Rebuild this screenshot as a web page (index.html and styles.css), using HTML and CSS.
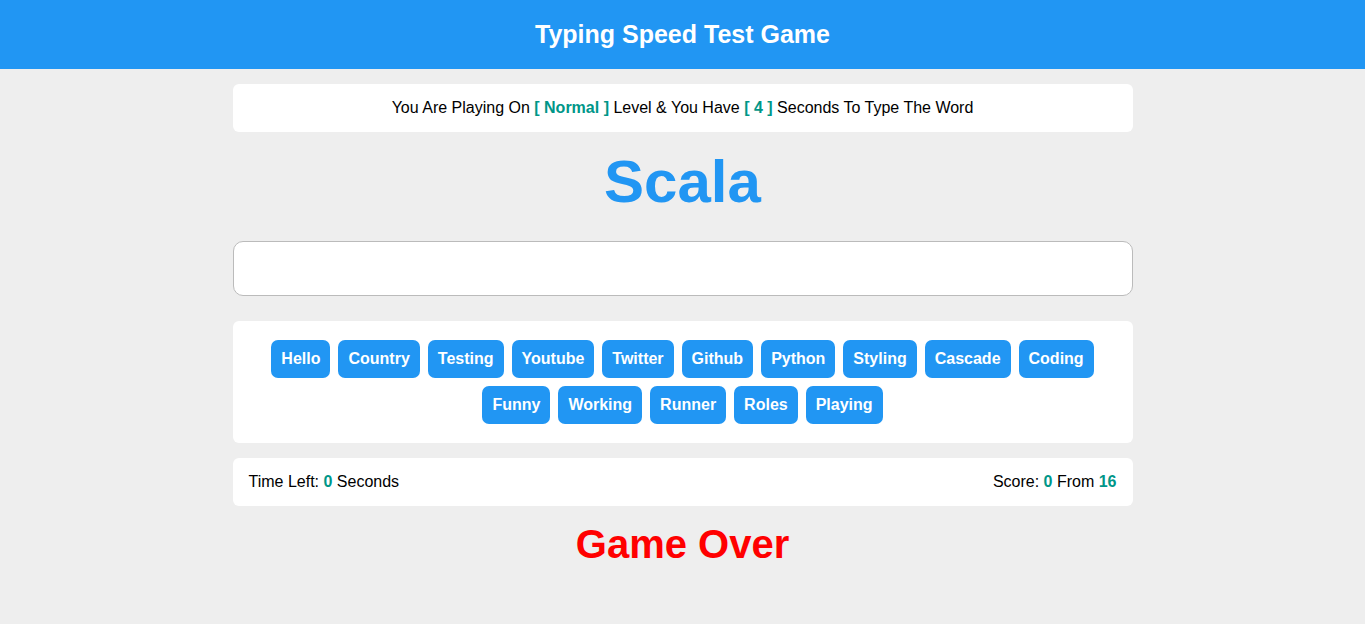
FILE: index.html
```html
<!DOCTYPE html>
<html lang="en">
<head>
<meta charset="utf-8">
<title>Typing Speed Test Game</title>
<link rel="stylesheet" href="styles.css">
</head>
<body>
<header class="site-header">Typing Speed Test Game</header>
<main class="game">
  <div class="message">You Are Playing On <span class="hl">[ Normal ]</span> Level &amp; You Have <span class="hl">[ 4 ]</span> Seconds To Type The Word</div>
  <div class="the-word">Scala</div>
  <input class="input" type="text" aria-label="Type the word">
  <div class="upcoming">
    <span class="word">Hello</span>
    <span class="word">Country</span>
    <span class="word">Testing</span>
    <span class="word">Youtube</span>
    <span class="word">Twitter</span>
    <span class="word">Github</span>
    <span class="word">Python</span>
    <span class="word">Styling</span>
    <span class="word">Cascade</span>
    <span class="word">Coding</span>
    <span class="word">Funny</span>
    <span class="word">Working</span>
    <span class="word">Runner</span>
    <span class="word">Roles</span>
    <span class="word">Playing</span>
  </div>
  <div class="control">
    <div class="time">Time Left: <span class="hl">0</span> Seconds</div>
    <div class="score">Score: <span class="hl">0</span> From <span class="hl">16</span></div>
  </div>
  <div class="finish">Game Over</div>
</main>
</body>
</html>
```

FILE: styles.css
```css
* { box-sizing: border-box; }
body {
  margin: 0;
  background: #eeeeee;
  font-family: "Liberation Sans", Arial, sans-serif;
  color: #000;
}
.site-header {
  background: #2196f3;
  color: #fff;
  font-weight: bold;
  font-size: 25px;
  line-height: 29px;
  padding: 20px;
  text-align: center;
}
.game {
  width: 900px;
  margin: 0 auto;
}
.hl {
  color: #009688;
  font-weight: bold;
}
.message {
  margin-top: 15px;
  background: #fff;
  border-radius: 6px;
  padding: 15px;
  font-size: 16px;
  line-height: 18px;
  text-align: center;
}
.the-word {
  margin: 15px 0 24px;
  font-size: 60px;
  line-height: 70px;
  font-weight: bold;
  color: #2196f3;
  text-align: center;
}
.input {
  display: block;
  width: 100%;
  height: 55px;
  border: 1px solid #bbb;
  border-radius: 10px;
  background: #fff;
  font-size: 16px;
  padding: 0 15px;
  outline: none;
}
.upcoming {
  margin-top: 25px;
  background: #fff;
  border-radius: 6px;
  padding: 19px 15px;
  display: flex;
  flex-wrap: wrap;
  justify-content: center;
  gap: 8px;
}
.word {
  background: #2196f3;
  color: #fff;
  font-weight: bold;
  font-size: 16px;
  line-height: 18px;
  padding: 10px;
  border-radius: 7px;
}
.control {
  margin-top: 15px;
  background: #fff;
  border-radius: 6px;
  padding: 15px 16px;
  display: flex;
  justify-content: space-between;
  font-size: 16px;
  line-height: 18px;
}
.finish {
  margin-top: 15px;
  text-align: center;
  color: #ff0000;
  font-weight: bold;
  font-size: 40px;
  line-height: 46px;
}
```
